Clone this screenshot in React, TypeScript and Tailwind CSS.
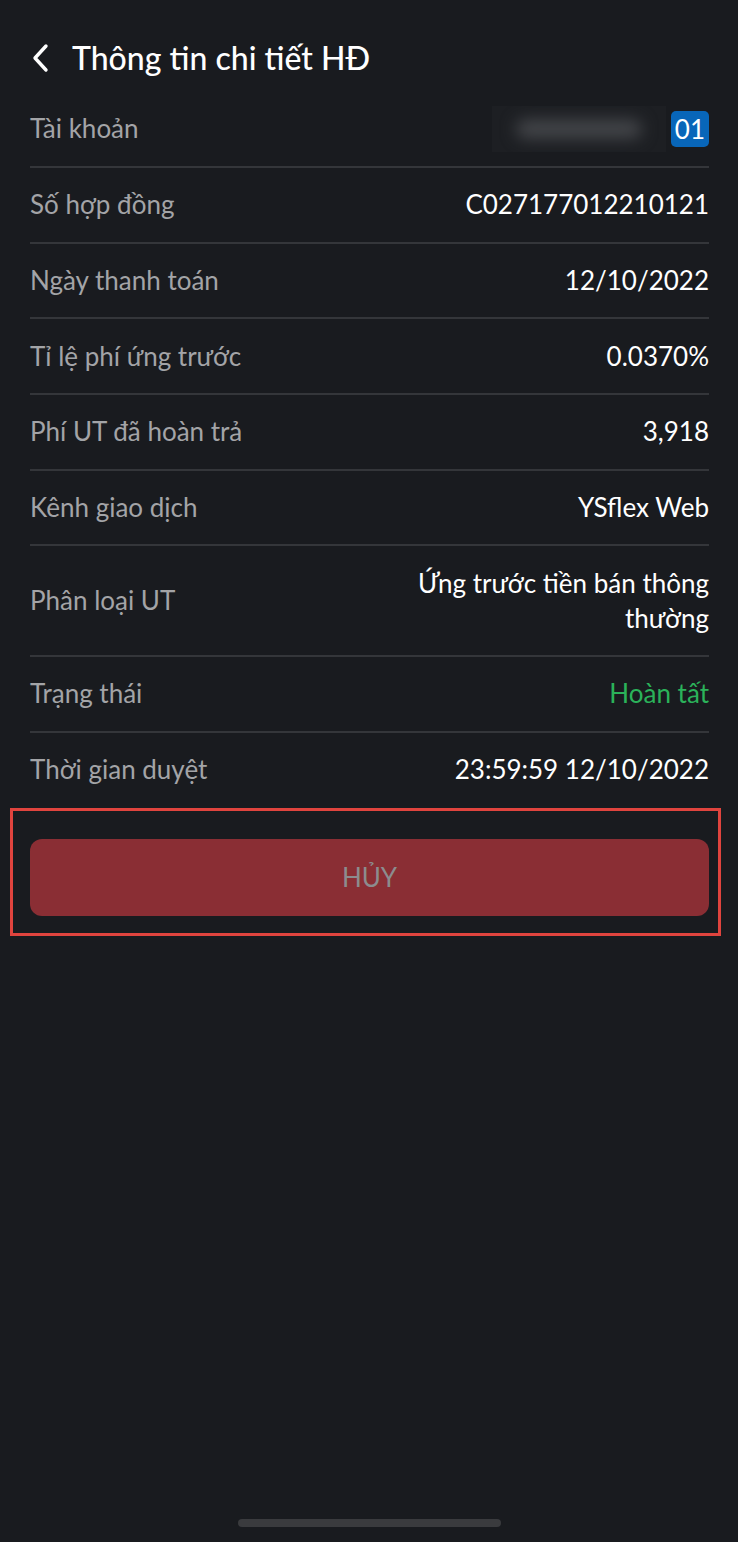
import React from 'react';

interface Row {
  label: string;
  value: React.ReactNode;
  tone?: 'white' | 'green';
}

const rows: Row[] = [
  { label: 'Số hợp đồng', value: 'C027177012210121' },
  { label: 'Ngày thanh toán', value: '12/10/2022' },
  { label: 'Tỉ lệ phí ứng trước', value: '0.0370%' },
  { label: 'Phí UT đã hoàn trả', value: '3,918' },
  { label: 'Kênh giao dịch', value: 'YSflex Web' },
  { label: 'Phân loại UT', value: 'Ứng trước tiền bán thông thường' },
  { label: 'Trạng thái', value: 'Hoàn tất', tone: 'green' },
  { label: 'Thời gian duyệt', value: '23:59:59 12/10/2022' },
];

export default function App() {
  return (
    <div
      className="min-h-[1542px] w-[738px] bg-[#191b1f] flex flex-col"
      style={{ fontFamily: 'Lato, "Noto Sans", sans-serif' }}
    >
      {/* header */}
      <div className="flex items-center gap-[20px] pl-[30px] pt-[40px] pb-[15px]">
        <svg width="22" height="30" viewBox="0 0 22 30" fill="none">
          <path d="M16 3 L5 15 L16 27" stroke="#ffffff" strokeWidth="3.4" strokeLinecap="round" strokeLinejoin="round" />
        </svg>
        <h1 className="text-[32px] leading-[36px] font-medium text-white">Thông tin chi tiết HĐ</h1>
      </div>

      {/* detail rows */}
      <div className="flex flex-col pl-[30px] pr-[29px]">
        <div className="flex items-center justify-between border-b-2 border-[#34363a] h-[77px]">
          <span className="text-[26px] text-[#a3a4a7]">Tài khoản</span>
          <div className="flex items-center gap-[5px]">
            <div className="relative w-[174px] h-[46px] bg-[#1d1f23] overflow-hidden">
              <div className="absolute left-[24px] right-[24px] top-[14px] h-[18px] rounded-full bg-[#46484c] blur-[8px]" />
            </div>
            <span className="bg-[#0866b9] text-white text-[26px] leading-[36px] px-[4px] rounded-[5px]">01</span>
          </div>
        </div>
        {rows.map((row, i) => (
          <div
            key={row.label}
            className={`flex items-center justify-between py-[19.35px] ${i < rows.length - 1 ? 'border-b-2 border-[#34363a]' : ''}`}
          >
            <span className="text-[26px] leading-[35px] text-[#a3a4a7]">{row.label}</span>
            <span
              className={`text-[26px] leading-[35px] text-right max-w-[300px] ${row.tone === 'green' ? 'text-[#2bb25a]' : 'text-white'}`}
            >
              {row.value}
            </span>
          </div>
        ))}
      </div>

      {/* cancel button area */}
      <div className="ml-[10px] mr-[17px] mt-[1px] border-[3px] border-[#e0443e] pt-[28px] pb-[17px] pl-[17px] pr-[9px]">
        <button className="w-full h-[77px] rounded-[12px] bg-[#8a2e34] text-[26px] text-[#8c8c8e]">
          HỦY
        </button>
      </div>

      <div className="flex-1" />
      <div className="flex justify-center pb-[15px]">
        <div className="w-[263px] h-[8px] rounded-full bg-[#3a3b3e]" />
      </div>
    </div>
  );
}
